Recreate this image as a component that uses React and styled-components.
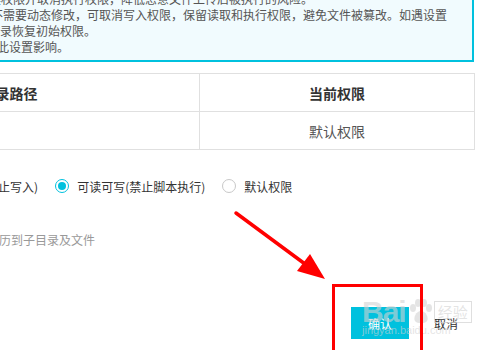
import * as React from "react"
import styled, { createGlobalStyle } from "styled-components"

const GlobalStyle = createGlobalStyle`
  html, body {
    margin: 0;
    padding: 0;
    background: #fff;
  }
  body {
    font-family: "Noto Sans CJK SC", "Noto Sans", sans-serif;
    color: #333;
  }
`

const Page = styled.div`
  position: relative;
  width: 500px;
  height: 350px;
  overflow: hidden;
  background: #fff;
`

// the dialog is cropped on the left, so its content starts off-screen
const Content = styled.div`
  margin-left: -181px;
  width: 655px;
  display: flex;
  flex-direction: column;
`

const Notice = styled.div`
  margin-top: -11px;
  padding: 0 0 5px 130px;
  background: #f1fbfe;
  border: 2px solid #00c1de;
  font-size: 12px;
  line-height: 16px;
  color: #555;
`

const NoticeLine = styled.div`
  margin-left: ${props => props.$shift}px;
  white-space: nowrap;
`

const Table = styled.table`
  margin-top: 11px;
  width: 655px;
  border-collapse: collapse;
  table-layout: fixed;
  font-size: 14px;
`

const Th = styled.th`
  height: 37px;
  border: 1px solid #e0e0e0;
  font-weight: bold;
  color: #333;
  text-align: center;
  padding: 0;
`

const Td = styled.td`
  height: 37px;
  border: 1px solid #e0e0e0;
  color: #555;
  text-align: center;
  padding: 0;
`

const RadioRow = styled.div`
  margin-top: 26px;
  padding-left: 117px;
  height: 20px;
  display: flex;
  align-items: center;
  gap: 17px;
  font-size: 12px;
  color: #333;
`

const RadioOption = styled.label`
  display: flex;
  align-items: center;
  gap: 8px;
  white-space: nowrap;
`

const RadioDot = styled.span`
  box-sizing: border-box;
  width: 14px;
  height: 14px;
  border-radius: 50%;
  border: 1px solid ${props => (props.$checked ? "#00c1de" : "#c8c8c8")};
  display: flex;
  align-items: center;
  justify-content: center;
  &::after {
    content: "";
    width: 8px;
    height: 8px;
    border-radius: 50%;
    background: ${props => (props.$checked ? "#00c1de" : "transparent")};
  }
`

const Hint = styled.div`
  margin-top: 34px;
  padding-left: 168px;
  height: 20px;
  line-height: 20px;
  font-size: 12px;
  color: #999;
`

const Footer = styled.div`
  margin-top: 57px;
  width: 656px;
  display: flex;
  justify-content: flex-end;
  gap: 8px;
`

const Button = styled.button`
  width: 58px;
  height: 32px;
  border: none;
  padding: 0;
  font-family: inherit;
  font-size: 12px;
  background: ${props => (props.$primary ? "#00c1de" : "#fff")};
  color: ${props => (props.$primary ? "#fff" : "#333")};
`

const Highlight = styled.div`
  position: absolute;
  left: 332px;
  top: 284px;
  width: 85px;
  height: 80px;
  border: 3px solid #ff0000;
`

const ArrowLayer = styled.svg`
  position: absolute;
  left: 0;
  top: 0;
  pointer-events: none;
`

const Watermark = styled.div`
  position: absolute;
  left: 362px;
  top: 296px;
  display: flex;
  flex-direction: column;
  align-items: flex-start;
  color: rgba(210, 210, 210, 0.6);
  font-family: "Liberation Sans", Arial, sans-serif;
  pointer-events: none;
`

const MarkTop = styled.div`
  display: flex;
  align-items: center;
  gap: 2px;
`

const MarkBai = styled.span`
  font-size: 30px;
  font-weight: bold;
  line-height: 32px;
  letter-spacing: -1px;
`

const MarkBox = styled.span`
  border: 1px solid rgba(210, 210, 210, 0.7);
  padding: 0 3px;
  font-family: "Noto Sans CJK SC", sans-serif;
  font-size: 15px;
  line-height: 20px;
`

const MarkUrl = styled.span`
  margin-top: -4px;
  font-size: 11px;
  line-height: 12px;
`

const Paw = () => (
  <svg width="24" height="26" viewBox="0 0 24 26">
    <g fill="rgba(210,210,210,0.6)">
      <ellipse cx="5" cy="9" rx="3" ry="4" />
      <ellipse cx="10" cy="4" rx="3" ry="4" />
      <ellipse cx="16" cy="4" rx="3" ry="4" />
      <ellipse cx="21" cy="9" rx="3" ry="4" />
      <path d="M13 12 C8 12 5 19 7 22 C9 25 17 25 19 22 C21 19 18 12 13 12 Z" />
    </g>
  </svg>
)

const App = () => (
  <Page>
    <GlobalStyle />
    <Content>
      <Notice>
        <NoticeLine $shift={2}>设为只读权限并取消执行权限，降低恶意文件上传后被执行的风险。</NoticeLine>
        <NoticeLine $shift={40}>不需要动态修改，可取消写入权限，保留读取和执行权限，避免文件被篡改。如遇设置</NoticeLine>
        <NoticeLine $shift={37}>目录恢复初始权限。</NoticeLine>
        <NoticeLine $shift={34}>受此设置影响。</NoticeLine>
      </Notice>

      <Table>
        <colgroup>
          <col style={{ width: 380 }} />
          <col style={{ width: 275 }} />
        </colgroup>
        <thead>
          <tr>
            <Th>目录路径</Th>
            <Th>当前权限</Th>
          </tr>
        </thead>
        <tbody>
          <tr>
            <Td></Td>
            <Td>默认权限</Td>
          </tr>
        </tbody>
      </Table>

      <RadioRow>
        <RadioOption>
          <RadioDot />
          只读(禁止写入)
        </RadioOption>
        <RadioOption>
          <RadioDot $checked />
          可读可写(禁止脚本执行)
        </RadioOption>
        <RadioOption>
          <RadioDot />
          默认权限
        </RadioOption>
      </RadioRow>

      <Hint>遍历到子目录及文件</Hint>

      <Footer>
        <Button $primary>确认</Button>
        <Button>取消</Button>
      </Footer>
    </Content>

    <Watermark>
      <MarkTop>
        <MarkBai>Bai</MarkBai>
        <Paw />
        <MarkBox>经验</MarkBox>
      </MarkTop>
      <MarkUrl>jingyan.baidu.com</MarkUrl>
    </Watermark>

    <Highlight />

    <ArrowLayer width="500" height="350" viewBox="0 0 500 350">
      <line x1="236" y1="213" x2="305" y2="264" stroke="#ff0000" strokeWidth="3.5" strokeLinecap="round" />
      <polygon points="325,279 297,271 310,254" fill="#ff0000" />
    </ArrowLayer>
  </Page>
)

export default App
